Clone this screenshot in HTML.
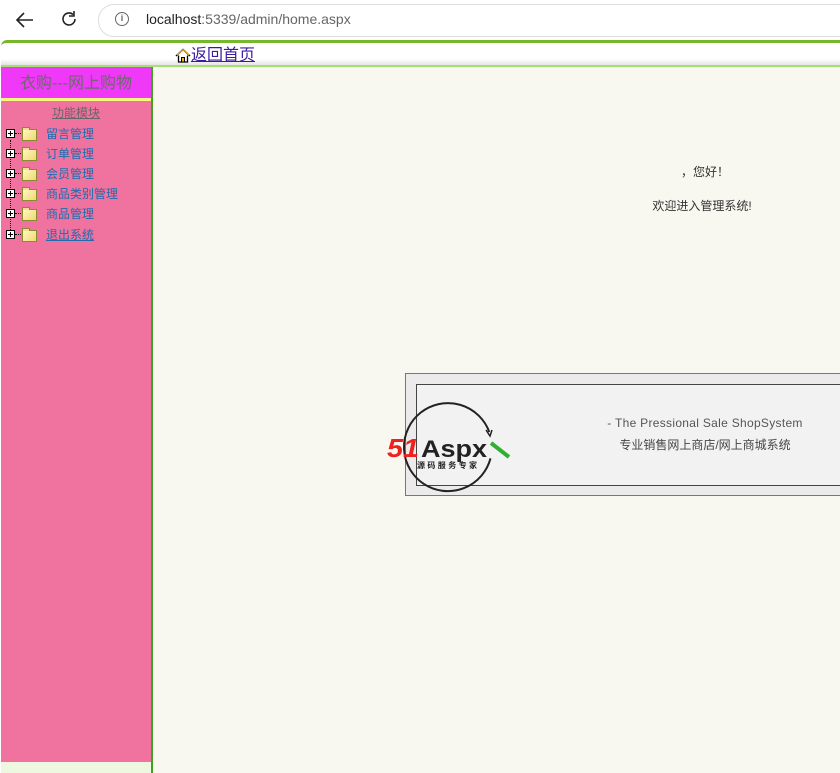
<!DOCTYPE html>
<html><head><meta charset="utf-8"><style>
body{margin:0;width:840px;height:773px;overflow:hidden;background:#fff;font-family:"Liberation Sans","Noto Sans CJK SC",sans-serif;position:relative}
.a{position:absolute}
.cn{font-family:"Liberation Sans","Noto Sans CJK SC",sans-serif}
.item{position:absolute;left:0;height:20px;width:150px}
.item .pl{position:absolute;left:6px;top:5px;width:9px;height:9px;border:1px solid #000;background:#fff;box-sizing:border-box}
.item .pl:before{content:"";position:absolute;left:1px;top:3px;width:5px;height:1px;background:#000}
.item .pl:after{content:"";position:absolute;left:3px;top:1px;width:1px;height:5px;background:#000}
.item .dot{position:absolute;left:15px;top:9px;width:6px;border-top:1px dotted #000}
.item .fd{position:absolute;left:22px;top:5px;width:15px;height:12px;background:linear-gradient(135deg,#fff8c0,#f0d870);border:1px solid #8a8a30;box-sizing:border-box}
.item .fd:before{content:"";position:absolute;left:-1px;top:-3px;width:6px;height:2px;background:#f0e090;border:1px solid #8a8a30;border-bottom:none}
.item .t{position:absolute;left:46px;top:0;font-size:12px;line-height:20px;color:#1d6cb0}
</style></head><body>
<div class="a" style="left:0;top:0;width:840px;height:40px;background:#fff"></div>
<svg class="a" style="left:14px;top:10px" width="22" height="20" viewBox="0 0 22 20"><path d="M19 10H3M10 3L3 10L10 17" fill="none" stroke="#222" stroke-width="1.6"/></svg>
<svg class="a" style="left:59px;top:9px" width="20" height="20" viewBox="0 0 20 20"><path d="M16 10a6 6 0 1 1-2-4.5" fill="none" stroke="#222" stroke-width="1.6"/><path d="M15 2v5h-5" fill="none" stroke="#222" stroke-width="1.6"/></svg>
<div class="a" style="left:98px;top:4px;width:760px;height:31px;border:1px solid #ddd;border-radius:16px;background:#fff"></div>
<div class="a" style="left:115px;top:12px;width:14px;height:14px;border:1.5px solid #666;border-radius:50%;box-sizing:border-box;font-size:9px;line-height:11px;text-align:center;color:#666;font-weight:bold">i</div>
<div class="a" style="left:146px;top:11px;font-size:14px;color:#222">localhost<span style="color:#666">:5339/admin/home.aspx</span></div>
<div class="a" style="left:1px;top:40px;width:839px;height:733px;background:#fff;border-radius:6px 0 0 0;border-top:3px solid #76b82a;box-sizing:border-box"></div>
<div class="a" style="left:1px;top:59px;width:839px;height:6px;background:linear-gradient(#fff,#e4e4e4)"></div>
<div class="a" style="left:1px;top:65px;width:839px;height:2px;background:#a8e070"></div>
<svg class="a" style="left:175px;top:48px" width="16" height="15" viewBox="0 0 16 15"><path d="M1 8L8 1.5L15 8" fill="none" stroke="#000" stroke-width="1.5"/><path d="M2 7L8 1.5L14 7" fill="none" stroke="#f8b020" stroke-width="1"/><path d="M3.5 7.5V14H12.5V7.5" fill="#fff" stroke="#000" stroke-width="1.3"/><rect x="6.5" y="9.5" width="3" height="4.5" fill="#f8b020" stroke="#000" stroke-width="1"/></svg>
<div class="a cn" style="left:191px;top:46px;font-size:16px;line-height:20px;color:#3a1aa0;text-decoration:underline">返回首页</div>
<div class="a" style="left:1px;top:67px;width:150px;height:706px;background:#eef8e0"></div>
<div class="a" style="left:1px;top:67px;width:150px;height:31px;background:#f038f8"></div>
<div class="a cn" style="left:1px;top:73px;width:150px;text-align:center;font-size:16px;color:#6a6a6a;line-height:22px">衣购---网上购物</div>
<div class="a" style="left:1px;top:98px;width:150px;height:3px;background:#f8f880"></div>
<div class="a" style="left:1px;top:101px;width:150px;height:661px;background:#f0729e"></div>
<div class="a cn" style="left:1px;top:104px;width:150px;text-align:center;font-size:12px;line-height:18px;color:#666;text-decoration:underline">功能模块</div>
<div class="a" style="left:10px;top:140px;height:96px;border-left:1px dotted #000"></div>
<div class="item" style="top:124px"><div class="pl"></div><div class="dot"></div><div class="fd"></div><div class="t cn">留言管理</div></div>
<div class="item" style="top:144px"><div class="pl"></div><div class="dot"></div><div class="fd"></div><div class="t cn">订单管理</div></div>
<div class="item" style="top:164px"><div class="pl"></div><div class="dot"></div><div class="fd"></div><div class="t cn">会员管理</div></div>
<div class="item" style="top:184px"><div class="pl"></div><div class="dot"></div><div class="fd"></div><div class="t cn">商品类别管理</div></div>
<div class="item" style="top:204px"><div class="pl"></div><div class="dot"></div><div class="fd"></div><div class="t cn">商品管理</div></div>
<div class="item" style="top:225px"><div class="pl"></div><div class="dot"></div><div class="fd"></div><div class="t cn" style="text-decoration:underline">退出系统</div></div>
<div class="a" style="left:151px;top:67px;width:2px;height:706px;background:#40a020"></div>
<div class="a" style="left:153px;top:67px;width:687px;height:706px;background:#f8f8f0"></div>
<div class="a cn" style="left:640px;top:163px;width:130px;text-align:center;font-size:12px;color:#333">，您好！</div>
<div class="a cn" style="left:637px;top:197px;width:130px;text-align:center;font-size:12px;color:#333">欢迎进入管理系统!</div>
<div class="a" style="left:405px;top:373px;width:440px;height:123px;border:1px solid #777;background:#ebebeb;box-sizing:border-box"></div>
<div class="a" style="left:416px;top:384px;width:430px;height:102px;border:1px solid #444;background:#f2f2f2;box-sizing:border-box"></div>
<div class="a" style="left:560px;top:416px;width:290px;text-align:center;font-size:12px;color:#555;letter-spacing:.3px">- The Pressional Sale ShopSystem</div>
<div class="a cn" style="left:560px;top:436px;width:290px;text-align:center;font-size:12px;color:#444">专业销售网上商店/网上商城系统</div>
<svg class="a" style="left:385px;top:400px" width="130" height="96" viewBox="0 0 130 96">
<path d="M104.3 32A44 44 0 1 0 105.5 58.4" fill="none" stroke="#222" stroke-width="2"/>
<path d="M101 30l4 6 2-6" fill="none" stroke="#222" stroke-width="1.5"/>
<text x="2" y="57" font-family="Liberation Sans" font-style="italic" font-weight="bold" font-size="26" fill="#f02020" textLength="32" lengthAdjust="spacingAndGlyphs">51</text>
<text x="36" y="57" font-family="Liberation Sans" font-weight="bold" font-size="24" fill="#222" textLength="66" lengthAdjust="spacingAndGlyphs">Aspx</text>
<path d="M106 43l18 14" stroke="#30b030" stroke-width="4"/>
<text x="32" y="68" font-family="Noto Sans CJK SC" font-size="8" font-weight="bold" fill="#222" textLength="60" lengthAdjust="spacing">源码服务专家</text>
</svg>
</body></html>
